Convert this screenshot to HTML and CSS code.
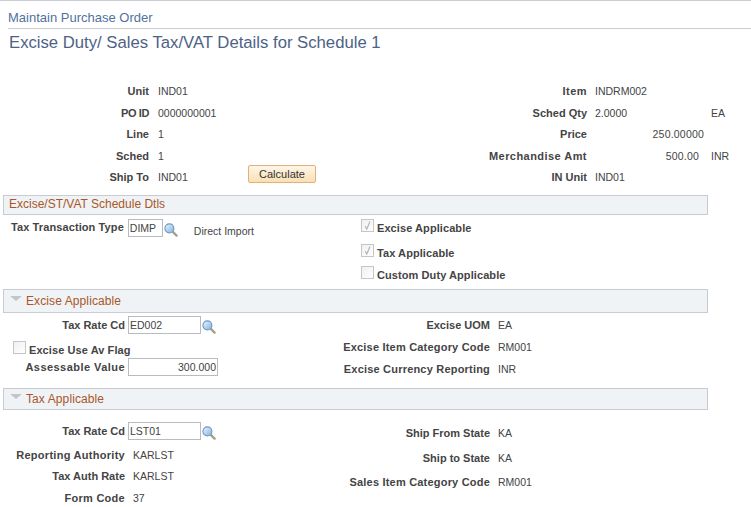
FILE: index.html
```html
<!DOCTYPE html>
<html lang="en">
<head>
<meta charset="utf-8">
<title>Excise Duty/ Sales Tax/VAT Details</title>
<link rel="stylesheet" href="styles.css">
</head>
<body>
<svg class="defs" width="0" height="0" aria-hidden="true">
  <defs>
    <linearGradient id="lens" x1="0" y1="0" x2="1" y2="1">
      <stop offset="0" stop-color="#eef6fc"/>
      <stop offset="1" stop-color="#7fb0dc"/>
    </linearGradient>
    <symbol id="search" viewBox="0 0 14 14">
      <path d="M8.8 8.8L12.6 12.6" stroke="#a9a08c" stroke-width="2.4" stroke-linecap="round"/>
      <circle cx="5.4" cy="5.4" r="4.5" fill="url(#lens)" stroke="#6a9ac8" stroke-width="1.1"/>
    </symbol>
    <symbol id="check" viewBox="0 0 11 11">
      <path d="M3.2 6L4.8 9L8 1.5" fill="none" stroke="#b4b7ba" stroke-width="1.2"/>
    </symbol>
  </defs>
</svg>
<div class="crumb">Maintain Purchase Order</div>
<h1 class="title">Excise Duty/ Sales Tax/VAT Details for Schedule 1</h1>

<section class="summary">
  <div class="lbl">Unit</div><div class="val">IND01</div><div></div>
  <div class="lbl ls-wide">Item</div><div class="val">INDRM002</div><div></div>
  <div class="lbl ls-tight">PO ID</div><div class="val">0000000001</div><div></div>
  <div class="lbl">Sched Qty</div><div class="val">2.0000</div><div class="val unit">EA</div>
  <div class="lbl">Line</div><div class="val">1</div><div></div>
  <div class="lbl">Price</div><div class="val amt">250.00000</div><div></div>
  <div class="lbl">Sched</div><div class="val">1</div><div></div>
  <div class="lbl ls-wide">Merchandise Amt</div><div class="val amt amt-short">500.00</div><div class="val unit">INR</div>
  <div class="lbl">Ship To</div><div class="val">IND01</div><div class="btn-cell"><button class="btn" type="button">Calculate</button></div>
  <div class="lbl">IN Unit</div><div class="val">IND01</div><div></div>
</section>

<h2 class="bar bar-plain">Excise/ST/VAT Schedule Dtls</h2>
<section class="sched">
  <div class="sched-left">
    <span class="lbl-inline">Tax Transaction Type</span>
    <span class="input input-short">DIMP</span>
    <svg class="lookup"><use href="#search"/></svg>
    <span class="desc">Direct Import</span>
  </div>
  <div class="checks">
    <label class="check c1"><span class="box"><svg class="tick"><use href="#check"/></svg></span>Excise Applicable</label>
    <label class="check c2"><span class="box"><svg class="tick"><use href="#check"/></svg></span>Tax Applicable</label>
    <label class="check c3"><span class="box"></span>Custom Duty Applicable</label>
  </div>
</section>

<h2 class="bar bar-excise"><span class="tri"></span>Excise Applicable</h2>
<section class="excise">
  <div class="col-left">
    <div class="line">
      <span class="lbl">Tax Rate Cd</span><span class="input input-mid">ED002</span><svg class="lookup"><use href="#search"/></svg>
    </div>
    <label class="check flag"><span class="box"></span>Excise Use Av Flag</label>
    <div class="line">
      <span class="lbl ls-wide">Assessable Value</span><span class="input input-wide">300.000</span>
    </div>
  </div>
  <div class="col-right">
    <div class="pair"><span class="lbl">Excise UOM</span><span class="val">EA</span></div>
    <div class="pair"><span class="lbl ls-mid">Excise Item Category Code</span><span class="val">RM001</span></div>
    <div class="pair"><span class="lbl ls-mid">Excise Currency Reporting</span><span class="val">INR</span></div>
  </div>
</section>

<h2 class="bar bar-tax"><span class="tri"></span>Tax Applicable</h2>
<section class="tax">
  <div class="col-left">
    <div class="line line-first">
      <span class="lbl">Tax Rate Cd</span><span class="input input-mid">LST01</span><svg class="lookup"><use href="#search"/></svg>
    </div>
    <div class="line text"><span class="lbl ls-high">Reporting Authority</span><span class="val">KARLST</span></div>
    <div class="line text"><span class="lbl">Tax Auth Rate</span><span class="val">KARLST</span></div>
    <div class="line text"><span class="lbl ls-high">Form Code</span><span class="val">37</span></div>
  </div>
  <div class="col-right tax-right">
    <div class="pair"><span class="lbl">Ship From State</span><span class="val">KA</span></div>
    <div class="pair"><span class="lbl">Ship to State</span><span class="val">KA</span></div>
    <div class="pair"><span class="lbl ls-mid">Sales Item Category Code</span><span class="val">RM001</span></div>
  </div>
</section>
</body>
</html>
```
FILE: styles.css
```css
* { box-sizing: border-box; }
html, body { margin: 0; padding: 0; }
body {
  width: 751px;
  height: 507px;
  overflow: hidden;
  background: #fff;
  color: #444;
  font-family: "Liberation Sans", Arial, sans-serif;
  font-size: 11px;
  border-top: 1px solid #c8ccd2;
}
.defs { position: absolute; }
.crumb {
  height: 28px;
  margin-left: 8px;
  padding-top: 9px;
  font-size: 13px;
  line-height: 16px;
  color: #51719f;
  border-bottom: 1px solid #c8ccd2;
}
.title {
  margin: 4px 0 0 9px;
  font-size: 16.7px;
  font-weight: normal;
  line-height: 20px;
  color: #4d6286;
}
.summary {
  display: grid;
  grid-template-columns: 149px 91px 76px 271px 117px 40px;
  grid-auto-rows: 21.5px;
  margin-top: 27px;
  padding-top: 0.5px;
  align-items: center;
}
.lbl {
  font-weight: bold;
  color: #444;
  text-align: right;
  white-space: nowrap;
}
.ls-wide { letter-spacing: 0.45px; }
.ls-high { letter-spacing: 0.28px; }
.ls-mid { letter-spacing: 0.2px; }
.ls-tight { letter-spacing: -0.4px; }
.val { color: #444; font-size: 10.5px; white-space: nowrap; padding-left: 8px; }
.summary .val:nth-child(6n+2) { padding-left: 9px; }
.unit { padding-left: 7px; }
.amt { text-align: right; padding-right: 0; letter-spacing: 0.2px; }
.amt-short { padding-right: 5px; }
.btn-cell { height: 100%; }
.btn {
  display: block;
  width: 68px;
  height: 18px;
  margin: -2px 0 0 8px;
  padding: 0;
  border: 1px solid #e0b27a;
  border-radius: 2px;
  background: linear-gradient(#fdf6e8, #fbdfb4);
  font: 11px "Liberation Sans", Arial, sans-serif;
  color: #333;
}
.bar {
  display: flex;
  align-items: center;
  width: 705px;
  margin: 0 0 0 3px;
  padding-left: 5px;
  background: #f0f3f5;
  border: 1px solid #c8ccd2;
  font-size: 12px;
  font-weight: normal;
  color: #a8562a;
}
.bar-plain { height: 20px; margin-top: 7px; padding-bottom: 2px; }
.bar-excise { height: 24px; letter-spacing: 0.1px; }
.bar-tax { height: 22px; letter-spacing: 0.1px; }
.tri {
  width: 0;
  height: 0;
  margin: 0 4px 6px 1px;
  border-left: 6px solid transparent;
  border-right: 6px solid transparent;
  border-top: 5px solid #c2c6ca;
}
.sched { height: 74px; display: flex; }
.sched-left { display: flex; align-items: flex-start; width: 361px; padding: 4px 0 0 11px; }
.lbl-inline { font-weight: bold; line-height: 14px; margin-top: 1px; letter-spacing: 0.1px; }
.input {
  display: block;
  flex: none;
  height: 18px;
  border: 1px solid #b8bcc0;
  background: #fff;
  color: #444;
  font-size: 10.5px;
  line-height: 16px;
  padding: 0 1px;
  margin-left: 3px;
}
.input-short { width: 35px; margin-left: 4px; }
.input-mid { width: 73px; }
.input-wide { width: 90px; text-align: right; }
.lookup { width: 14px; height: 14px; margin: 4px 0 0 1px; flex: none; align-self: flex-start; }
.desc { margin: 6px 0 0 16px; font-size: 10.5px; }
.checks { flex: 1; padding-top: 3px; }
.check {
  display: flex;
  align-items: center;
  font-weight: bold;
  color: #444;
  white-space: nowrap;
  letter-spacing: 0.08px;
}
.box {
  display: block;
  width: 13px;
  height: 13px;
  margin: 0 3px 5px 0;
  border: 1px solid #c4c7ca;
  background: linear-gradient(135deg, #f0f0f0, #fff);
  flex: none;
}
.tick { display: block; width: 11px; height: 11px; }
.c1, .c2, .c3 { height: 20px; }
.c1 { margin-bottom: 5px; }
.c2 { margin-bottom: 2px; }
.excise, .tax { display: flex; }
.col-left { width: 300px; }
.col-right { flex: 1; }
.excise { height: 75px; }
.excise .col-left { padding-top: 3px; }
.excise .col-right { padding-top: 1px; }
.line { display: flex; align-items: center; height: 18px; }
.line .lbl { width: 125px; flex: none; }
.line .val { padding-left: 8px; }
.line.text { height: 21.5px; }
.line-first { margin-bottom: 4px; }
.tax .col-left { padding-top: 12px; }
.flag { margin: 8px 0 0 13px; height: 16px; }
.pair { display: flex; align-items: center; height: 22px; }
.pair .lbl { width: 190px; flex: none; }
.tax-right { padding-top: 11px; }
.tax-right .pair { height: 24.5px; }
```
